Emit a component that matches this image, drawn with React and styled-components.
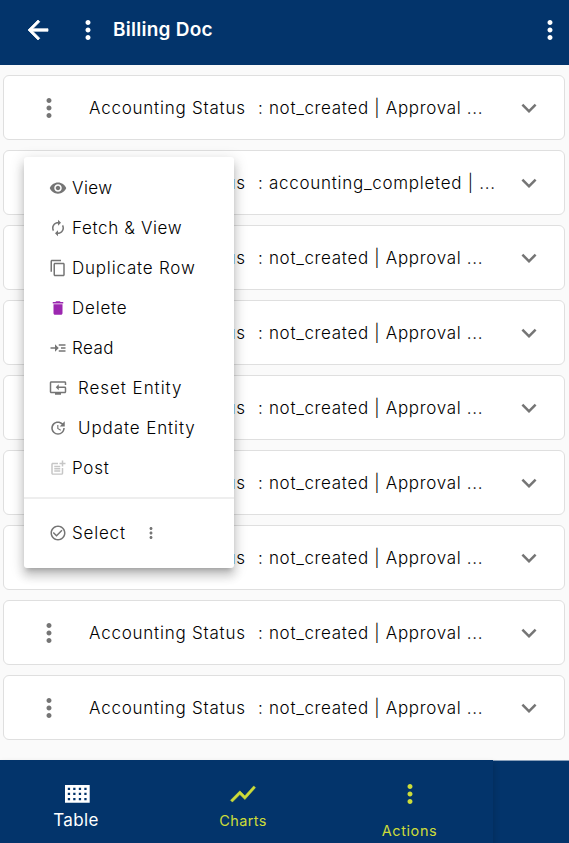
import React from "react";
import styled, { createGlobalStyle } from "styled-components";
import {
  MdArrowBack, MdMoreVert, MdVisibility, MdAutorenew, MdContentCopy, MdDelete,
  MdReadMore, MdResetTv, MdUpdate, MdPostAdd, MdCheckCircleOutline, MdExpandMore, MdShowChart,
} from "react-icons/md";

const Global = createGlobalStyle`
  *, *::before, *::after { box-sizing: border-box; }
  body { margin: 0; background: #fafafa; color: #000; font-family: Inter, "Liberation Sans", sans-serif; font-weight: 360; overflow: hidden; }
  svg { display: block; flex: none; }
`;
const Page = styled.div`
  position: relative;
  height: 843px;
  display: flex;
  flex-direction: column;
  overflow: hidden;
`;
const Header = styled.header`
  height: 65px;
  flex: none;
  display: flex;
  align-items: center;
  padding: 0 4px 5px 23px;
  background: #03346b;
  color: #fff;
`;
const BackIcon = styled(MdArrowBack)`
  path:not([fill="none"]) {
    stroke: currentColor;
    stroke-width: 0.6px;
  }
`;
const HeaderMenu = styled.span`
  margin-left: 20px;
`;
const Title = styled.h1`
  margin: 0 auto 0 10px;
  font-size: 19px;
  line-height: 24px;
  font-weight: 600;
  letter-spacing: ${(p) => p.$spacing}px;
`;
const List = styled.main`
  flex: none;
  height: 695px;
  display: flex;
  flex-direction: column;
  gap: 10px;
  padding: 10px 4px 0 3px;
`;
const Card = styled.article`
  height: 65px;
  flex: none;
  display: flex;
  align-items: center;
  padding-left: 30px;
  border: 1px solid #dfdfdf;
  border-radius: 6px;
  background: #fff;
  color: #757575;
`;
const Field = styled.span`
  width: 169px;
  margin-left: 25px;
  color: #000;
  font-size: 17px;
  line-height: 24px;
  letter-spacing: ${(p) => p.$spacing}px;
  white-space: nowrap;
`;
const Value = styled(Field)`
  width: 256px;
  margin-left: 0;
`;
const Menu = styled.div`
  position: absolute;
  left: 24px;
  top: 157px;
  width: 210px;
  height: 411px;
  padding-top: 11px;
  border-radius: 3px;
  background: #fff;
  box-shadow: 0 5px 5px -3px rgba(0,0,0,.2), 0 8px 10px 1px rgba(0,0,0,.14), 0 3px 14px 2px rgba(0,0,0,.12);
`;
const MenuItem = styled.div`
  height: 40px;
  display: flex;
  align-items: center;
  padding-left: 25px;
  color: ${(p) => p.$color || "#757575"};
`;
const Label = styled.span`
  margin-left: ${(p) => (p.$indent ? 11 : 5)}px;
  color: #000;
  font-size: 17px;
  line-height: 24px;
  letter-spacing: ${(p) => p.$spacing}px;
  white-space: nowrap;
`;
const Divider = styled.hr`
  height: 2px;
  margin: 9px 0 14px;
  border: 0;
  background: #eee;
`;
const RowMenu = styled.span`
  margin-left: 16px;
`;
const Footer = styled.footer`
  height: 83px;
  flex: none;
  background: #03346b;
  border-top: 1px solid #8aa0ba;
`;
const Tabs = styled.nav`
  width: 493px;
  height: 83px;
  margin-top: -1px;
  display: grid;
  grid-template-columns: 160px 166px 167px;
  background: #03346b;
  box-shadow: 1px 3px 6px rgba(0,0,0,.16);
`;
const Tab = styled.div`
  display: flex;
  flex-direction: column;
  align-items: center;
  padding-top: ${(p) => p.$top}px;
  padding-right: ${(p) => p.$shift || 0}px;
  color: ${(p) => (p.$active ? "#fff" : "#cddc39")};
`;
const TabLabel = styled.span`
  margin-top: ${(p) => p.$gap}px;
  margin-left: ${(p) => -(p.$nudge || 0)}px;
  font-size: ${(p) => p.$size}px;
  font-weight: 400;
  line-height: 20px;
  letter-spacing: ${(p) => p.$spacing}px;
`;
const TrendIcon = styled(MdShowChart)`
  path:not([fill="none"]) {
    stroke: currentColor;
    stroke-width: 0.4px;
  }
`;

const TableIcon = () => (
  <svg width="25" height="18" viewBox="0 0 25 18" fill="currentColor" fillRule="evenodd">
    <path d="M0 0h24.7v17.7H0zM2.8 2.8v2.3h2.3V2.8zm5.4 0v2.3h2.3V2.8zm5.6 0v2.3h2.3V2.8zm5.5 0v2.3h2.3V2.8zM2.8 7.8v2.3h2.3V7.8zm5.4 0v2.3h2.3V7.8zm5.6 0v2.3h2.3V7.8zm5.5 0v2.3h2.3V7.8zM2.8 12.9v2.3h2.3v-2.3zm5.4 0v2.3h2.3v-2.3zm5.6 0v2.3h2.3v-2.3zm5.5 0v2.3h2.3v-2.3z" />
  </svg>
);

const NOT_CREATED = { text: ": not_created | Approval ...", spacing: 0.68 };
const COMPLETED = { text: ": accounting_completed | ...", spacing: 0.72 };
const rows = [NOT_CREATED, COMPLETED, ...Array(7).fill(NOT_CREATED)];

const actions = [
  { label: "View", icon: MdVisibility, spacing: 0.45 },
  { label: "Fetch & View", icon: MdAutorenew, spacing: 0.64 },
  { label: "Duplicate Row", icon: MdContentCopy, spacing: 0.8 },
  { label: "Delete", icon: MdDelete, spacing: 0.8, color: "#9c27b0" },
  { label: "Read", icon: MdReadMore, spacing: 0.45 },
  { label: "Reset Entity", icon: MdResetTv, spacing: 0.95, indent: true },
  { label: "Update Entity", icon: MdUpdate, spacing: 0.9, indent: true },
  { label: "Post", icon: MdPostAdd, spacing: 0.75, color: "#c6c6c6" },
];

export default function App() {
  return (
    <Page>
      <Global />
      <Header>
        <BackIcon size={30} />
        <HeaderMenu><MdMoreVert size={30} /></HeaderMenu>
        <Title $spacing={0.25}>Billing Doc</Title>
        <HeaderMenu><MdMoreVert size={30} /></HeaderMenu>
      </Header>
      <List>
        {rows.map((row, i) => (
          <Card key={i}>
            <MdMoreVert size={30} />
            <Field $spacing={0.77}>Accounting Status</Field>
            <Value $spacing={row.spacing}>{row.text}</Value>
            <MdExpandMore size={30} />
          </Card>
        ))}
      </List>
      <Footer>
        <Tabs>
          <Tab $active $top={25} $shift={6}>
            <TableIcon />
            <TabLabel $gap={7} $size={17} $spacing={0.4} $nudge={2}>Table</TabLabel>
          </Tab>
          <Tab $top={19}>
            <TrendIcon size={30} />
            <TabLabel $gap={2} $size={14.5} $spacing={0.4}>Charts</TabLabel>
          </Tab>
          <Tab $top={19}>
            <MdMoreVert size={30} />
            <TabLabel $gap={12} $size={14.5} $spacing={0.6}>Actions</TabLabel>
          </Tab>
        </Tabs>
      </Footer>
      <Menu>
        {actions.map(({ label, icon: Icon, spacing, color, indent }) => (
          <MenuItem key={label} $color={color}>
            <Icon size={18} />
            <Label $spacing={spacing} $indent={indent}>{label}</Label>
          </MenuItem>
        ))}
        <Divider />
        <MenuItem>
          <MdCheckCircleOutline size={18} />
          <Label $spacing={0.8}>Select</Label>
          <RowMenu><MdMoreVert size={18} /></RowMenu>
        </MenuItem>
      </Menu>
    </Page>
  );
}
